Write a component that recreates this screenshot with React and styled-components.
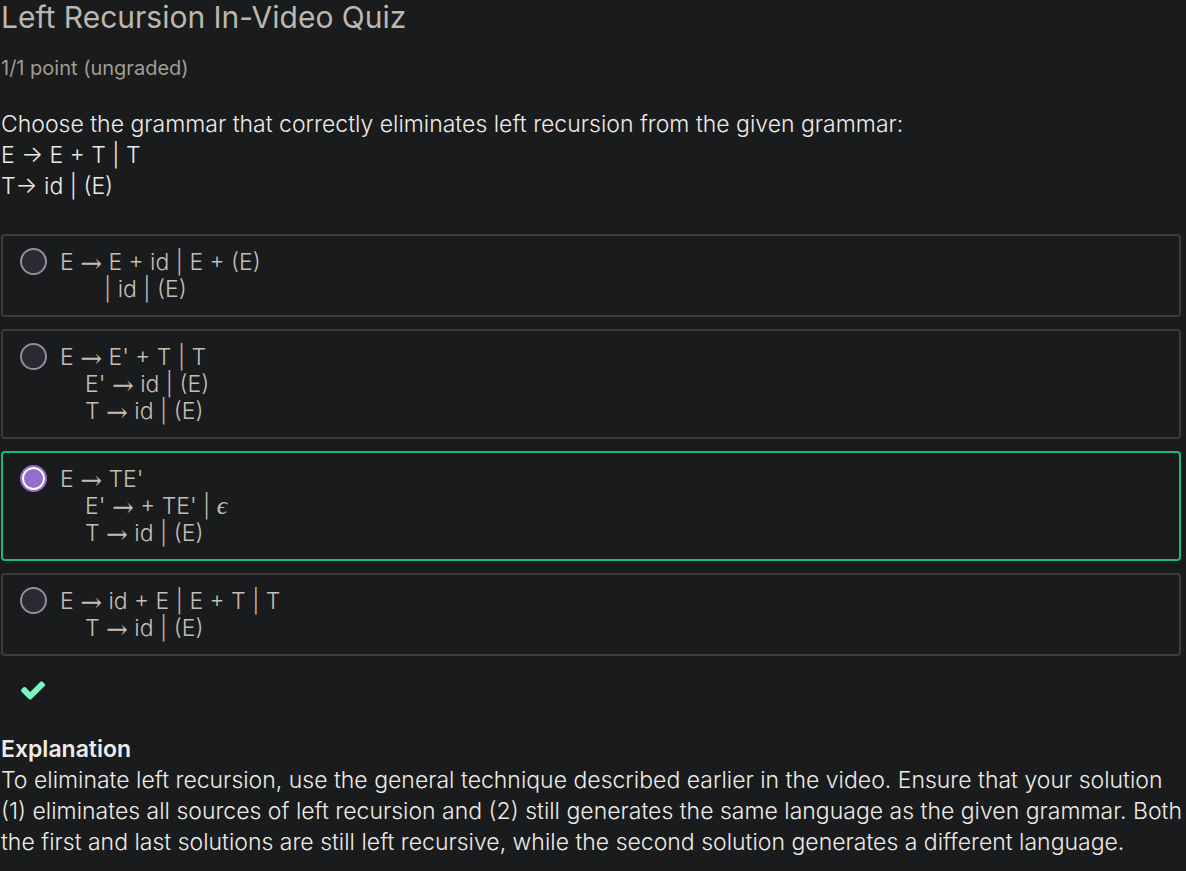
import React from "react";
import styled, { createGlobalStyle } from "styled-components";

const GlobalStyle = createGlobalStyle`
  * { box-sizing: border-box; }
  body {
    margin: 0;
    background: #1a1b1c;
    color: #edebe8;
    font-family: Inter, "Liberation Sans", sans-serif;
    font-size: 23px;
    font-weight: 300;
    line-height: 31px;
  }
`;

const Page = styled.main`
  padding: 0 0 12px 1px;
`;

const Title = styled.h1`
  margin: 0;
  color: #bdb7af;
  font-size: 30px;
  font-weight: 400;
  line-height: 34px;
`;

const Points = styled.p`
  margin: 20px 0 26px;
  color: #a49c91;
  font-size: 20px;
  font-weight: 400;
  line-height: 29px;
`;

const Text = styled.p`
  margin: 0;
`;

const Choices = styled.fieldset`
  display: flex;
  flex-direction: column;
  gap: 12px;
  min-width: 0;
  margin: 32px 5px 0 0;
  padding: 0;
  border: 0;
`;

const Choice = styled.label`
  display: flex;
  align-items: flex-start;
  gap: 13px;
  padding: 12px 17px;
  border: 2px solid ${(p) => (p.$correct ? "#18bb78" : "#3b3c3e")};
  border-radius: 4px;
  color: #c4beb6;
  line-height: 27px;
`;

const Grammar = styled.span`
  padding-top: 1px;
`;

const Radio = styled.input`
  appearance: none;
  flex: none;
  width: 27px;
  height: 27px;
  margin: 0;
  border: 2px solid #8f8f9d;
  border-radius: 50%;
  background: #2b2a33;

  &:checked {
    border-color: #9270ca;
    background: #9270ca;
    box-shadow: inset 0 0 0 2px #ffffff;
  }
`;

const Line = styled.span`
  display: block;
  padding-left: ${(p) => p.$indent || 0}px;
  white-space: pre;
`;

const Arrow = styled.span`
  font-family: "DejaVu Serif", serif;
  font-size: 26px;
  line-height: 0;
  vertical-align: -2px;
`;

const Epsilon = styled.span`
  font-family: "Liberation Serif", serif;
  font-size: 26px;
  font-style: italic;
  font-weight: 400;
  line-height: 0;
`;

const Status = styled.div`
  display: flex;
  margin: 20px 0 0 18px;
  color: #7af5c0;
`;

const Explanation = styled.section`
  margin-top: 30px;
`;

const Heading = styled.h2`
  margin: 0;
  font-size: 23px;
  font-weight: 600;
  line-height: 31px;
`;

const choices = [
  { lines: [[0, "E → E + id | E + (E)"], [44, "| id | (E)"]] },
  { lines: [[0, "E → E' + T | T"], [25, "E' → id | (E)"], [25, "T → id | (E)"]] },
  { correct: true, lines: [[0, "E → TE'"], [25, "E' → + TE' | ϵ"], [25, "T → id | (E)"]] },
  { lines: [[0, "E → id + E | E + T | T"], [25, "T → id | (E)"]] },
];

const symbols = { "→": Arrow, "ϵ": Epsilon };

const Formula = ({ children }) =>
  children.split(/([→ϵ])/).map((part, i) => {
    const Symbol = symbols[part];
    return Symbol ? <Symbol key={i}>{part}</Symbol> : part;
  });

export default function App() {
  return (
    <>
      <GlobalStyle />
      <Page>
        <Title>Left Recursion In-Video Quiz</Title>
        <Points>1/1 point (ungraded)</Points>
        <Text id="question">
          Choose the grammar that correctly eliminates left recursion from the given grammar:
          <br />E → E + T | T
          <br />T→ id | (E)
        </Text>
        <Choices aria-labelledby="question">
          {choices.map((choice, i) => (
            <Choice key={i} $correct={choice.correct}>
              <Radio type="radio" name="grammar" defaultChecked={choice.correct} />
              <Grammar>
                {choice.lines.map(([indent, text], j) => (
                  <Line key={j} $indent={indent}>
                    <Formula>{text}</Formula>
                  </Line>
                ))}
              </Grammar>
            </Choice>
          ))}
        </Choices>
        <Status>
          <svg width="28" height="28" viewBox="0 0 1792 1792" fill="currentColor" role="img" aria-label="Correct">
            <path d="M1671 566q0 40-28 68l-724 724-136 136q-28 28-68 28t-68-28l-136-136-362-362q-28-28-28-68t28-68l136-136q28-28 68-28t68 28l294 295 656-657q28-28 68-28t68 28l136 136q28 28 28 68z" />
          </svg>
        </Status>
        <Explanation>
          <Heading>Explanation</Heading>
          <Text>
            To eliminate left recursion, use the general technique described earlier in the video. Ensure that your
            solution (1) eliminates all sources of left recursion and (2) still generates the same language as the
            given grammar. Both the first and last solutions are still left recursive, while the second solution
            generates a different language.
          </Text>
        </Explanation>
      </Page>
    </>
  );
}
